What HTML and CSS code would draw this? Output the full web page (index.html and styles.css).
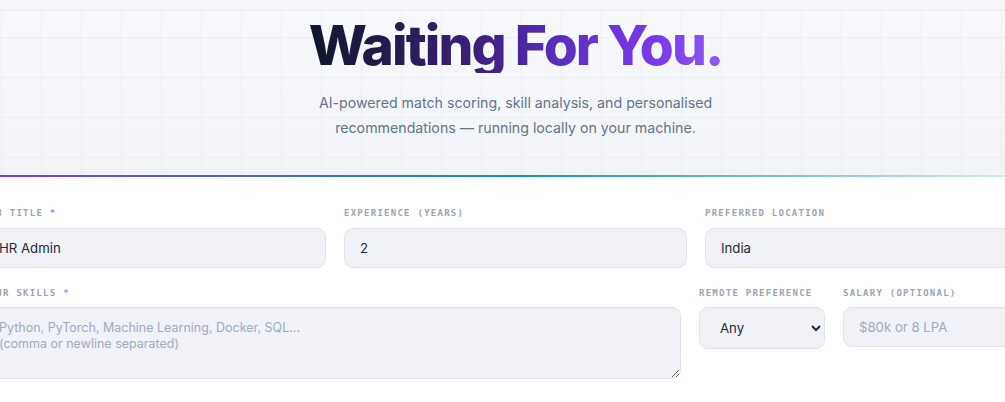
FILE: index.html
```html
<!DOCTYPE html>
<html lang="en">
<head>
<meta charset="utf-8">
<title>Waiting For You</title>
<link rel="stylesheet" href="styles.css">
</head>
<body>
<div class="page">
  <div class="topbar"></div>
  <header class="hero">
    <h1 class="title">Waiting For You.</h1>
    <p class="subtitle">AI-powered match scoring, skill analysis, and personalised<br>recommendations — running locally on your machine.</p>
  </header>
  <div class="accent"></div>
  <section class="form">
    <div class="row row-3">
      <div class="field">
        <label class="label">Job Title <span class="req">*</span></label>
        <input class="control" type="text" value="HR Admin">
      </div>
      <div class="field">
        <label class="label">Experience (Years)</label>
        <input class="control" type="text" value="2">
      </div>
      <div class="field">
        <label class="label">Preferred Location</label>
        <input class="control" type="text" value="India">
      </div>
    </div>
    <div class="row row-skills">
      <div class="field">
        <label class="label">Your Skills <span class="req">*</span></label>
        <textarea class="control area" placeholder="Python, PyTorch, Machine Learning, Docker, SQL...&#10;(comma or newline separated)"></textarea>
      </div>
      <div class="field">
        <label class="label">Remote Preference</label>
        <select class="control select">
          <option>Any</option>
          <option>Remote</option>
          <option>Hybrid</option>
          <option>On-site</option>
        </select>
      </div>
      <div class="field">
        <label class="label">Salary (Optional)</label>
        <input class="control" type="text" placeholder="$80k or 8 LPA">
      </div>
    </div>
  </section>
</div>
</body>
</html>
```

FILE: styles.css
```css
html, body {
  margin: 0;
  padding: 0;
  overflow: hidden;
  background: #ffffff;
}

body {
  font-family: Inter, "Noto Sans", sans-serif;
  color: #1e293b;
}

.page {
  width: 1065px;
  margin-left: -17px;
}

.topbar {
  height: 10px;
  background: #f4f5f9;
  border-bottom: 1px solid #e7e9f0;
}

.hero {
  background-color: #f7f8fc;
  background-image:
    linear-gradient(to right, #eceef4 1px, transparent 1px),
    linear-gradient(to bottom, #eceef4 1px, transparent 1px),
    linear-gradient(to bottom, #f8f9fd, #f2f3f7);
  background-size: 40px 40px, 40px 40px, 100% 100%;
  background-position: 18px 26px, 18px 26px, 0 0;
  text-align: center;
  padding: 6px 0 35px;
}

.title {
  margin: 0;
  font-size: 55px;
  line-height: 56px;
  font-weight: 800;
  letter-spacing: -0.035em;
  display: inline-block;
  background: linear-gradient(90deg, #0f172a 0%, #3b1f7a 40%, #5b2fc4 62%, #7c3aed 85%, #8b5cf6 100%);
  -webkit-background-clip: text;
  background-clip: text;
  color: transparent;
}

.subtitle {
  margin: 17px 0 0;
  font-size: 14.2px;
  line-height: 25px;
  color: #64748b;
}

.accent {
  height: 2px;
  background: linear-gradient(90deg, #7c3aed 0%, #0e93b8 50%, rgba(14, 147, 184, 0.12) 100%);
}

.form {
  padding-top: 30px;
  display: flex;
  flex-direction: column;
  gap: 19px;
}

.row {
  display: grid;
  column-gap: 18px;
  align-items: start;
}

.row-3 {
  grid-template-columns: 1fr 1fr 1fr;
}

.row-skills {
  grid-template-columns: 698px 126px 1fr;
}

.field {
  display: flex;
  flex-direction: column;
  gap: 9px;
}

.row-skills .field {
  gap: 8px;
}

.label {
  font-family: "DejaVu Sans Mono", "Liberation Mono", monospace;
  font-size: 9px;
  line-height: 12px;
  font-weight: 700;
  letter-spacing: 0.14em;
  text-transform: uppercase;
  color: #9aa3b5;
}

.req {
  color: #a78bfa;
}

.control {
  box-sizing: border-box;
  height: 40px;
  width: 100%;
  margin: 0;
  padding: 0 15px;
  border: 1px solid #dfe3ec;
  border-radius: 9px;
  background: #f0f2f7;
  font-family: Inter, "Noto Sans", sans-serif;
  font-size: 13.2px;
  color: #1e293b;
  outline: none;
}

.control::placeholder {
  color: #a0aabd;
}

.area {
  height: 72px;
  padding: 12px 15px;
  font-size: 12.5px;
  line-height: 15.6px;
  resize: vertical;
}

.select {
  height: 42px;
  padding: 0 8px 0 16px;
}
```
